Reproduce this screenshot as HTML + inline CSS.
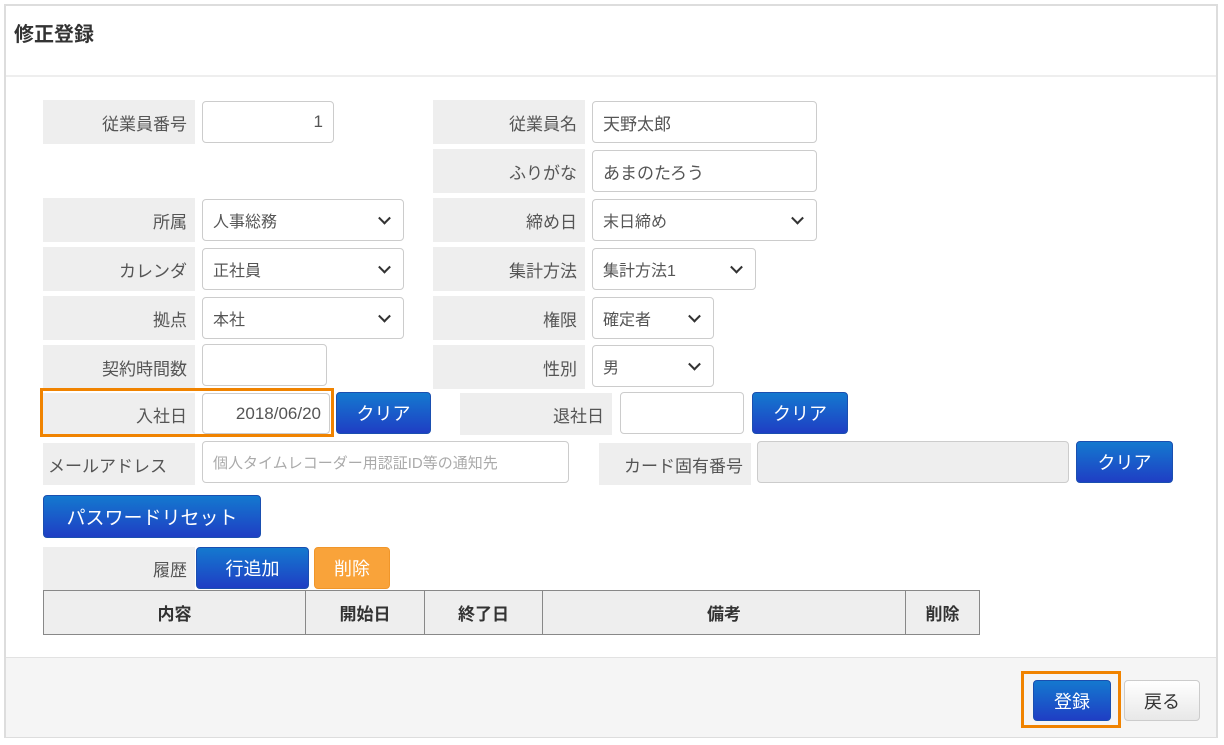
<!DOCTYPE html>
<html><head><meta charset="utf-8"><style>
*{box-sizing:border-box;margin:0;padding:0}
body{width:1224px;height:745px;background:#fff;font-family:"Liberation Sans","Noto Sans CJK JP",sans-serif;position:relative;overflow:hidden;color:#333}
.a{position:absolute}
.frame{left:4px;top:4px;width:1214px;height:734px;border:2px solid #ddd}
.hdr{left:14px;top:18px;font-size:20px;font-weight:bold;color:#333}
.hl{left:6px;top:75px;width:1210px;height:2px;background:#eee}
.foot{left:6px;top:657px;width:1210px;height:80px;background:#f5f5f5;border-top:1px solid #e2e2e2}
.lb{background:#eee;font-size:17px;color:#555;text-align:right;padding-right:8px;display:flex;align-items:center;justify-content:flex-end}
.in{background:#fff;border:1px solid #ccc;border-radius:4px;font-size:17px;color:#555;display:flex;align-items:center;padding:0 10px}
.sel{font-size:16px}
.sel:after{content:"";position:absolute;right:14px;top:50%;width:7px;height:7px;border-right:2px solid #333;border-bottom:2px solid #333;transform:translateY(-70%) rotate(45deg)}
.btn{background:linear-gradient(#1479cf,#1f3ec4);color:#fff;border-radius:4px;font-size:18px;display:flex;align-items:center;justify-content:center;border:1px solid #1a4fb0}
.og{background:#f9a33a;border-color:#f0962a;color:#fff}
table{border-collapse:collapse;font-size:17px;font-weight:bold;color:#333}
td{border:1px solid #888;background:#eee;text-align:center;height:44px}
</style></head><body>
<div class="a frame"></div>
<div class="a hdr">修正登録</div>
<div class="a hl"></div>
<div class="a foot"></div>

<div class="a lb" style="left:43px;top:100px;width:152px;height:44px">従業員番号</div>
<div class="a in" style="left:202px;top:101px;width:132px;height:42px;justify-content:flex-end">1</div>
<div class="a lb" style="left:433px;top:100px;width:152px;height:44px">従業員名</div>
<div class="a in" style="left:592px;top:101px;width:225px;height:42px">天野太郎</div>
<div class="a lb" style="left:433px;top:149px;width:152px;height:44px">ふりがな</div>
<div class="a in" style="left:592px;top:150px;width:225px;height:42px">あまのたろう</div>

<div class="a lb" style="left:43px;top:198px;width:152px;height:44px">所属</div>
<div class="a in sel" style="left:202px;top:199px;width:202px;height:42px">人事総務</div>
<div class="a lb" style="left:433px;top:198px;width:152px;height:44px">締め日</div>
<div class="a in sel" style="left:592px;top:199px;width:225px;height:42px">末日締め</div>

<div class="a lb" style="left:43px;top:247px;width:152px;height:44px">カレンダ</div>
<div class="a in sel" style="left:202px;top:248px;width:202px;height:42px">正社員</div>
<div class="a lb" style="left:433px;top:247px;width:152px;height:44px">集計方法</div>
<div class="a in sel" style="left:592px;top:248px;width:164px;height:42px">集計方法1</div>

<div class="a lb" style="left:43px;top:296px;width:152px;height:44px">拠点</div>
<div class="a in sel" style="left:202px;top:297px;width:202px;height:42px">本社</div>
<div class="a lb" style="left:433px;top:296px;width:152px;height:44px">権限</div>
<div class="a in sel" style="left:592px;top:297px;width:122px;height:42px">確定者</div>

<div class="a lb" style="left:43px;top:345px;width:152px;height:44px">契約時間数</div>
<div class="a in" style="left:202px;top:344px;width:125px;height:42px"></div>
<div class="a lb" style="left:433px;top:345px;width:152px;height:44px">性別</div>
<div class="a in sel" style="left:592px;top:345px;width:122px;height:42px">男</div>

<div class="a lb" style="left:43px;top:393px;width:152px;height:42px">入社日</div>
<div class="a in" style="left:202px;top:393px;width:128px;height:41px;font-size:17px;padding:0 8px;justify-content:flex-end">2018/06/20</div>
<div class="a" style="left:40px;top:388px;width:294px;height:49px;border:3px solid #f08300"></div>
<div class="a btn" style="left:336px;top:392px;width:95px;height:42px">クリア</div>
<div class="a lb" style="left:460px;top:393px;width:152px;height:42px">退社日</div>
<div class="a in" style="left:620px;top:392px;width:124px;height:42px"></div>
<div class="a btn" style="left:752px;top:392px;width:96px;height:42px">クリア</div>

<div class="a lb" style="left:43px;top:443px;width:152px;height:42px;justify-content:flex-start;padding-left:5px;font-size:17px">メールアドレス</div>
<div class="a in" style="left:202px;top:441px;width:367px;height:42px;font-size:15px;color:#aaa">個人タイムレコーダー用認証ID等の通知先</div>
<div class="a lb" style="left:599px;top:443px;width:152px;height:42px">カード固有番号</div>
<div class="a in" style="left:757px;top:441px;width:312px;height:42px;background:#eee"></div>
<div class="a btn" style="left:1076px;top:441px;width:97px;height:42px">クリア</div>

<div class="a btn" style="left:43px;top:495px;width:218px;height:43px;font-size:19px">パスワードリセット</div>

<div class="a lb" style="left:43px;top:547px;width:152px;height:43px">履歴</div>
<div class="a btn" style="left:196px;top:547px;width:113px;height:42px">行追加</div>
<div class="a btn og" style="left:314px;top:547px;width:76px;height:42px">削除</div>

<table class="a" style="left:43px;top:590px;width:937px">
<tr><td style="width:262px">内容</td><td style="width:119px">開始日</td><td style="width:118px">終了日</td><td style="width:363px">備考</td><td>削除</td></tr>
</table>

<div class="a" style="left:1021px;top:671px;width:100px;height:57px;border:3px solid #f08300"></div>
<div class="a btn" style="left:1033px;top:680px;width:78px;height:41px">登録</div>
<div class="a" style="left:1124px;top:680px;width:76px;height:41px;border:1px solid #ccc;border-radius:4px;background:linear-gradient(#fff,#e8e8e8);font-size:18px;display:flex;align-items:center;justify-content:center;color:#333">戻る</div>
</body></html>
